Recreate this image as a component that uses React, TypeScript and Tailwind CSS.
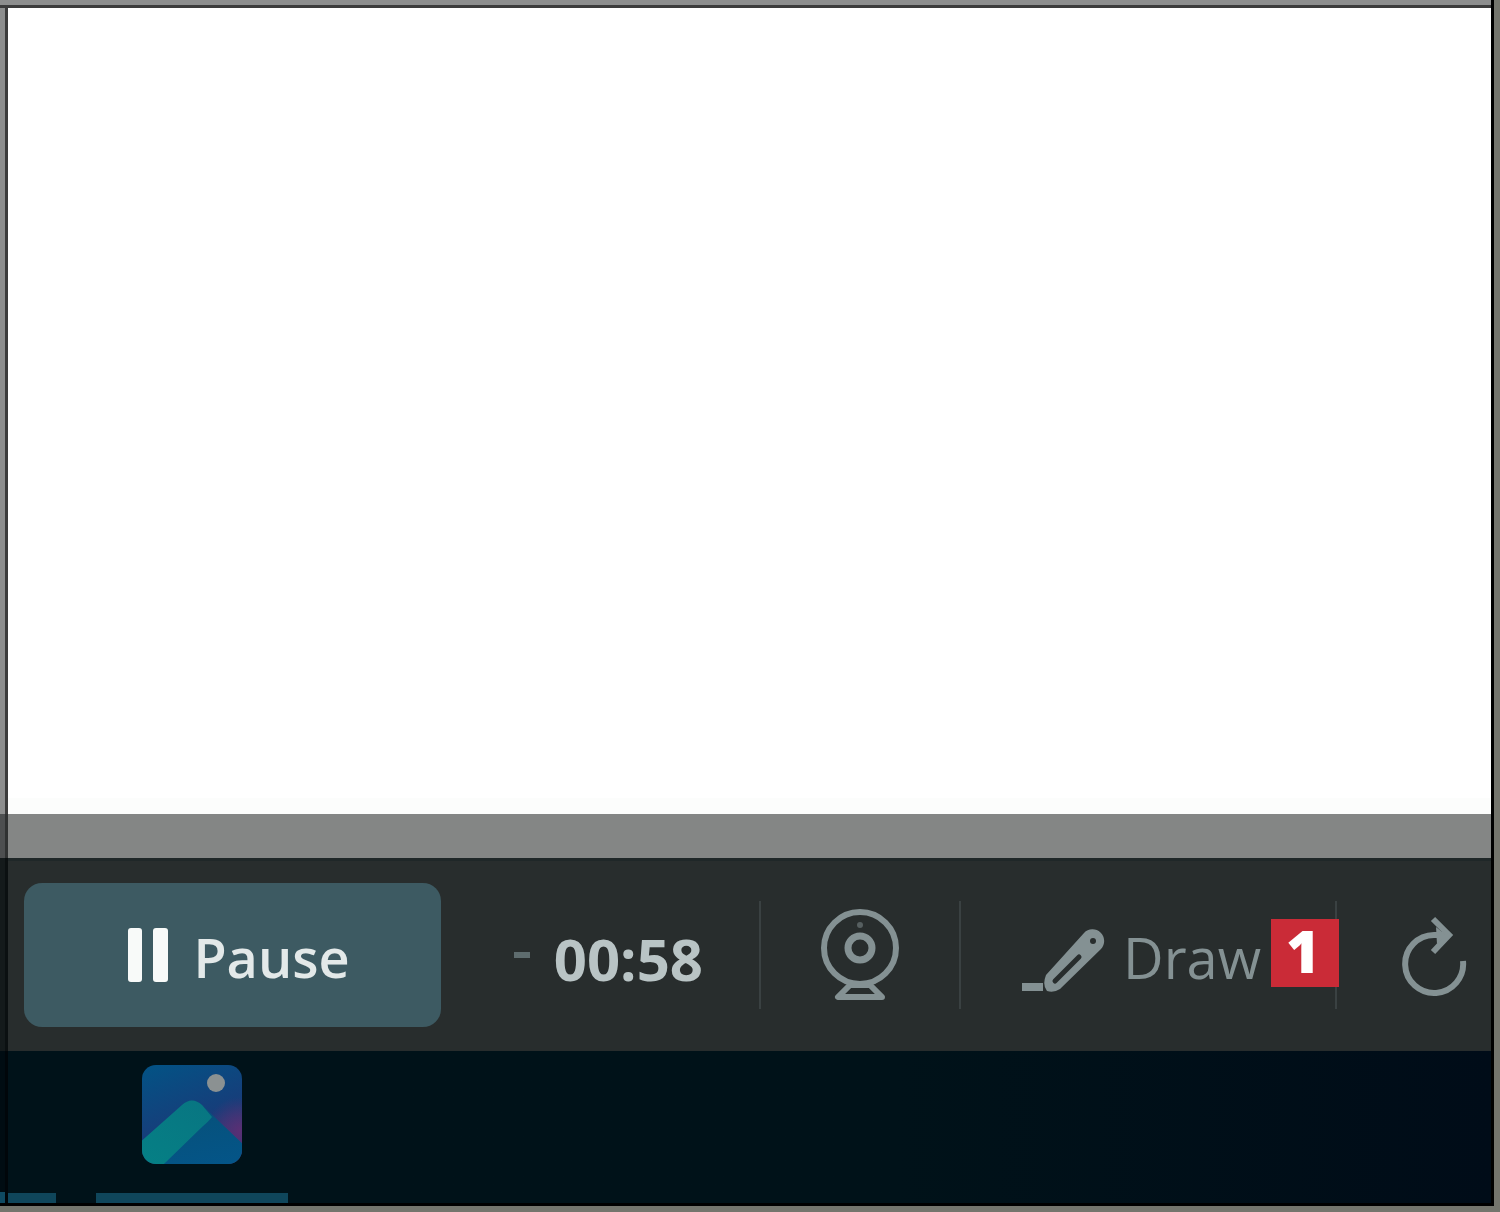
import type { ReactNode } from "react";
import clsx from "clsx";

const iconButtonClassName =
  "flex shrink-0 items-center self-stretch text-[#849193] transition-colors duration-300 hover:text-white";

function WebcamIcon() {
  return (
    <svg width="82" height="94" viewBox="0 0 82 94" fill="none" stroke="currentColor" aria-hidden="true">
      <circle cx="41" cy="40" r="36" strokeWidth="6" />
      <circle cx="41" cy="40" r="12" strokeWidth="7" />
      <circle cx="41" cy="17" r="3" fill="currentColor" stroke="none" opacity="0.5" />
      <path d="M31 77 L19 89 H63 L51 77 Z" strokeWidth="6" strokeLinejoin="round" />
    </svg>
  );
}

function PenIcon() {
  return (
    <svg width="86" height="76" viewBox="0 0 86 76" fill="none" stroke="currentColor" aria-hidden="true">
      <path d="M1 70 H22" strokeWidth="8" />
      <path d="M63 16 A11 11 0 0 1 80 32 L39 72 Q33 76 26 74 Q21 68 25 58 Z" fill="currentColor" stroke="none" />
      <path d="M34 64 L58 40" stroke="#282d2d" strokeWidth="5" strokeLinecap="round" />
      <circle cx="72" cy="24" r="3" fill="#282d2d" stroke="none" />
    </svg>
  );
}

function RestartIcon() {
  return (
    <svg width="68" height="84" viewBox="-1 -2 68 84" fill="none" stroke="currentColor" strokeWidth="6" aria-hidden="true">
      <path d="M63 46 A29 29 0 1 1 34 20 H46" />
      <path d="M33 4 L49 20 L33 37" />
      <path d="M36 12 L46 20 L37 29 Z" fill="currentColor" stroke="none" />
    </svg>
  );
}

function PhotosIcon() {
  return (
    <svg width="100" height="100" viewBox="0 0 100 100" aria-hidden="true">
      <defs>
        <linearGradient id="sky" x1="0.2" y1="0" x2="0.6" y2="1">
          <stop offset="0" stopColor="#045184" />
          <stop offset="0.6" stopColor="#173d7a" />
          <stop offset="1" stopColor="#3d3776" />
        </linearGradient>
        <radialGradient id="dusk" cx="0.98" cy="0.66" r="0.34">
          <stop offset="0" stopColor="#5a2f74" />
          <stop offset="1" stopColor="#5a2f74" stopOpacity="0" />
        </radialGradient>
        <linearGradient id="ridge" x1="0.8" y1="0" x2="0.1" y2="1">
          <stop offset="0" stopColor="#087682" />
          <stop offset="1" stopColor="#058085" />
        </linearGradient>
        <linearGradient id="slope" x1="0.3" y1="0" x2="0.6" y2="1">
          <stop offset="0" stopColor="#075078" />
          <stop offset="1" stopColor="#045588" />
        </linearGradient>
        <clipPath id="tile">
          <rect width="100" height="99" rx="14" />
        </clipPath>
      </defs>
      <g clipPath="url(#tile)">
        <rect width="100" height="100" fill="url(#sky)" />
        <rect width="100" height="100" fill="url(#dusk)" />
        <path d="M40 40 Q50 31 60 40 L104 82 V104 H10 Z" fill="url(#slope)" />
        <path d="M-4 79 L40 40 Q50 31 60 40 L70 52 Q67 56 60 62 L24 97 Q19 102 14 104 H-4 Z" fill="url(#ridge)" />
      </g>
      <circle cx="74" cy="18" r="9" fill="#8b9192" />
    </svg>
  );
}

type RowProps = {
  edge: string;
  className: string;
  children?: ReactNode;
};

// One horizontal slice of the screen, with the neighbouring window showing at its left edge
function Row({ edge, className, children }: RowProps) {
  return (
    <div className={clsx("flex", className)}>
      <div className={clsx("w-2 shrink-0 border-r-3", edge)} />
      {children}
    </div>
  );
}

function Divider() {
  return <div className="h-27 w-0.5 shrink-0 bg-[#3a4142]" />;
}

export default function App() {
  return (
    <div className="flex min-h-screen flex-col bg-[#74756d] pb-1.5 pr-1.5 font-['Open_Sans','Noto_Sans',sans-serif]">
      <div className="flex flex-1 flex-col border-b-3 border-r-3 border-black">
        <div className="h-2 border-b-3 border-[#3c3c3c] bg-[#8d8e8e]" />

        <Row edge="border-[#3c3c3c] bg-[#8d8e8e]" className="flex-1 bg-white">
          <main className="flex flex-1 flex-col justify-end">
            <div className="h-4 bg-[#fcfdfc]" />
          </main>
        </Row>

        <Row edge="border-[#303232] bg-[#4d4f50]" className="h-11 bg-[#848685]" />

        <Row edge="border-[#0b1011] bg-[#141a1b]" className="bg-[#282d2d]">
          <div className="flex flex-1 items-center border-t-3 border-[#1f2728] pb-6 pl-4 pt-[22px]">
            <button
              type="button"
              className="flex h-36 w-[417px] shrink-0 items-center justify-center gap-6 rounded-[18px] bg-[#3d5a62] pl-3 text-[54px] font-semibold leading-none text-[#e3e9e9]"
            >
              <svg width="42" height="56" viewBox="0 0 42 56" fill="#f8faf9" aria-hidden="true">
                <rect x="1" y="1" width="14" height="54" rx="3" />
                <rect x="26" y="1" width="15" height="54" rx="3" />
              </svg>
              <span className="pt-1">Pause</span>
            </button>

            <div className="flex w-[318px] shrink-0 items-center justify-end gap-6 pr-14">
              <span className="h-1.5 w-4 bg-[#5e6c6e]" />
              <time className="pt-2 text-[58px] font-bold leading-none text-[#b9c4c5]">00:58</time>
            </div>

            <Divider />

            <button
              type="button"
              aria-label="Webcam"
              className={clsx(iconButtonClassName, "w-[198px] justify-center")}
            >
              <WebcamIcon />
            </button>

            <Divider />

            <button
              type="button"
              className={clsx(iconButtonClassName, "relative w-[374px] gap-4 pl-15 text-[56px] leading-none")}
            >
              <PenIcon />
              <span className="pt-1">Draw</span>
              <span className="absolute -right-1 top-9 flex size-17 items-center justify-center bg-[#ca2b37] pb-1 pr-1 text-[58px] font-extrabold leading-none text-white">
                1
              </span>
            </button>

            <Divider />

            <button
              type="button"
              aria-label="Restart"
              className={clsx(iconButtonClassName, "flex-1 justify-end pr-6")}
            >
              <RestartIcon />
            </button>
          </div>
        </Row>

        <Row
          edge="border-[#00060a] bg-linear-to-t from-[#0f4a62] from-7% to-[#000c12] to-7%"
          className="bg-linear-to-r from-[#001219] from-60% to-[#000c18]"
        >
          <nav className="flex h-38 flex-1 items-stretch gap-10">
            <div className="w-12 border-b-10 border-[#0f465b]" />
            <button
              type="button"
              aria-label="Photos"
              className="flex w-48 items-start justify-center border-b-10 border-[#0f465b] pt-3.5"
            >
              <PhotosIcon />
            </button>
          </nav>
        </Row>
      </div>
    </div>
  );
}
